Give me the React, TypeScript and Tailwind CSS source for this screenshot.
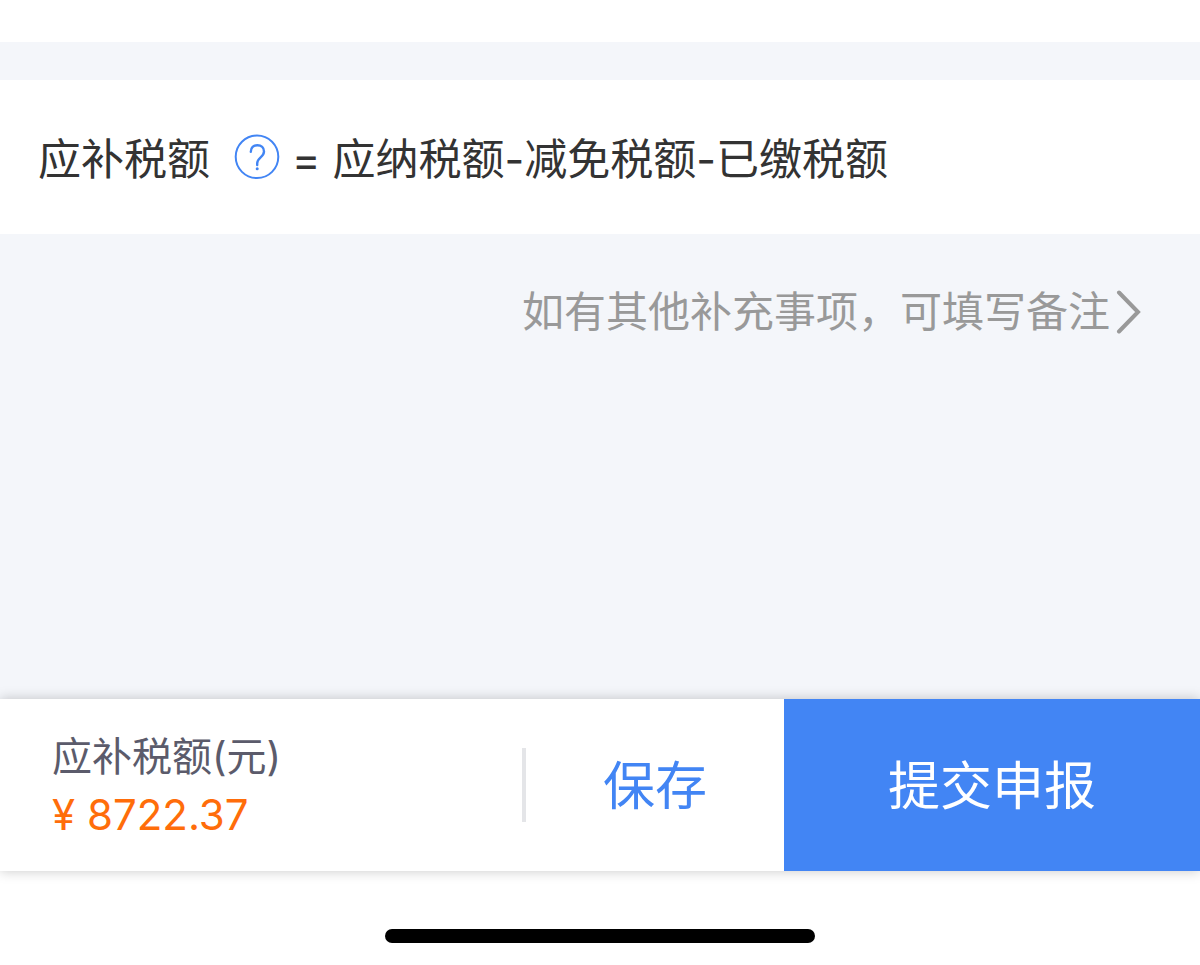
function HelpIcon() {
  return (
    <svg viewBox="0 0 46 46" className="h-[46px] w-[46px]" fill="none" stroke="currentColor" aria-hidden="true">
      <circle cx="23" cy="22.8" r="21.3" strokeWidth="2" />
      <path
        d="M16.8 17.8c0-4.2 2.7-6.6 6.6-6.6s6.6 2.6 6.6 6.3c0 5.8-6.8 5.8-6.8 11.8v1.8"
        strokeWidth="2.4"
        strokeLinecap="round"
      />
      <circle cx="23.2" cy="34.8" r="1.5" fill="currentColor" stroke="none" />
    </svg>
  );
}

function ChevronIcon() {
  return (
    <svg viewBox="0 0 26 44" className="h-11 w-[26px]" fill="none" stroke="currentColor" aria-hidden="true">
      <path d="M3 2.5 22 22 3 41.5" strokeWidth="4" strokeLinecap="round" strokeLinejoin="miter" />
    </svg>
  );
}

export default function App() {
  return (
    <div className="flex min-h-screen flex-col bg-[#f4f6fa] font-['Inter','Noto_Sans_CJK_SC',sans-serif]">

      {/* End of the previous card */}
      <div className="h-[42px] bg-white" />

      {/* Formula */}
      <section className="mt-[38px] flex h-[154px] items-center bg-white px-[38px] text-[43px] leading-[60px] text-[#333333]">
        <span className="pt-1">应补税额</span>
        <button type="button" aria-label="应补税额说明" className="ml-6 mr-3 text-[#4285f4]">
          <HelpIcon />
        </button>
        <span className="pt-1">= 应纳税额-减免税额-已缴税额</span>
      </section>

      {/* Remark link */}
      <main className="flex flex-1 items-start justify-end px-[58px] pt-12">
        <a href="#remark" className="flex items-center gap-1.5 text-[42px] leading-[60px] text-[#999999]">
          如有其他补充事项，可填写备注
          <ChevronIcon />
        </a>
      </main>

      {/* Bottom bar */}
      <footer className="bg-white">
        <div className="relative grid h-[172px] grid-cols-[261fr_131fr_208fr] bg-white shadow-[0_0_12px_rgba(0,0,0,0.22)]">
          <div className="flex flex-col justify-center pl-[52px]">
            <span className="text-[40px] leading-[60px] text-[#5b5b6b]">应补税额(元)</span>
            <span className="text-[42px] leading-[56px] text-[#ff6d0a]">¥ 8722.37</span>
          </div>
          <div className="flex items-center">
            <span className="h-[74px] w-1 bg-[#e4e5e8]" />
            <button type="button" className="h-full flex-1 pt-1 text-[52px] text-[#4285f4]">
              保存
            </button>
          </div>
          <button type="button" className="bg-[#4285f4] pt-1 text-[52px] text-white">
            提交申报
          </button>
        </div>

        {/* Home indicator */}
        <div className="flex h-[94px] items-end justify-center pb-[22px]">
          <div className="h-[14px] w-[430px] rounded-full bg-black" />
        </div>
      </footer>

    </div>
  );
}
